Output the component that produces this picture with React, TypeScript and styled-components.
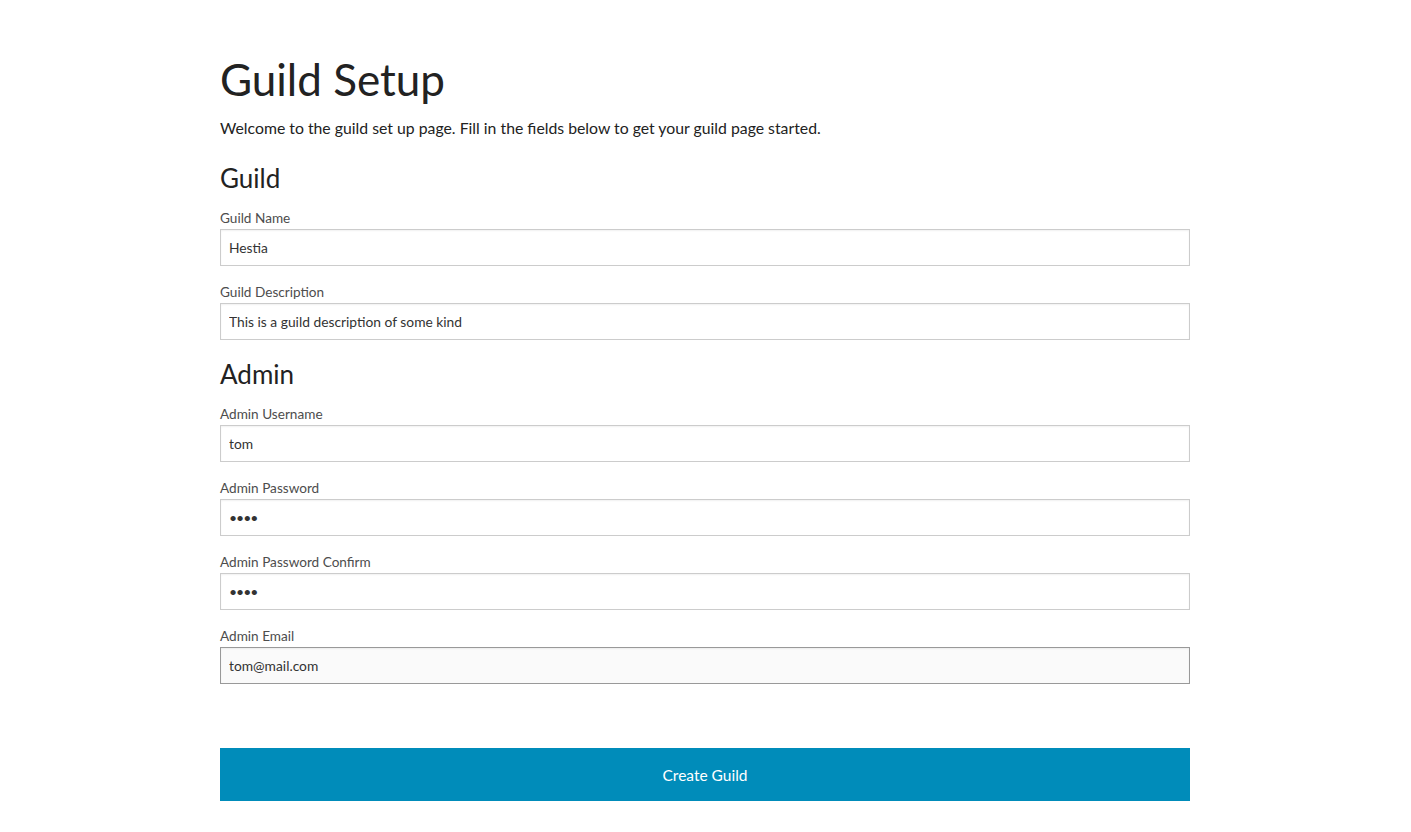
import React from "react";
import styled, { createGlobalStyle } from "styled-components";

const Global = createGlobalStyle`
  html, body { margin: 0; padding: 0; background: #fff; }
  body { font-family: Lato, "Open Sans", sans-serif; color: #222; }
  * { box-sizing: border-box; }
`;

const Page = styled.main`
  padding: 52px 221px 31px 220px;
`;

const Title = styled.h1`
  margin: 0;
  font-size: 44px;
  font-weight: 400;
  line-height: 54px;
  color: #222;
`;

const Intro = styled.p`
  margin: 10px 0 0;
  font-size: 15.8px;
  line-height: 24px;
  color: #222;
`;

const SectionTitle = styled.h2<{ $top: number }>`
  margin: ${(p) => p.$top}px 0 12px;
  font-size: 26px;
  font-weight: 400;
  line-height: 36px;
  color: #222;
`;

const Field = styled.div`
  display: flex;
  flex-direction: column;
  margin-bottom: 16px;
`;

const Label = styled.label`
  font-size: 13.6px;
  line-height: 21px;
  color: #4d4d4d;
`;

const Input = styled.input<{ $active?: boolean }>`
  width: 100%;
  height: 37px;
  padding: 0 8px;
  font-family: Lato, "Open Sans", sans-serif;
  font-size: 13.8px;
  color: #333;
  background: ${(p) => (p.$active ? "#fafafa" : "#fff")};
  border: 1px solid ${(p) => (p.$active ? "#999" : "#ccc")};
  box-shadow: inset 0 1px 2px rgba(0, 0, 0, 0.06);
  border-radius: 0;
  outline: none;
  &[type="password"] {
    font-size: 14px;
    letter-spacing: -1px;
  }
`;

const Submit = styled.button`
  display: block;
  width: 100%;
  height: 53px;
  margin-top: 64px;
  border: none;
  background: #008cba;
  color: #fff;
  font-family: Lato, "Open Sans", sans-serif;
  font-size: 15.5px;
  cursor: pointer;
`;

type F = { label: string; value: string; type?: string; active?: boolean };

const guild: F[] = [
  { label: "Guild Name", value: "Hestia" },
  { label: "Guild Description", value: "This is a guild description of some kind" },
];

const admin: F[] = [
  { label: "Admin Username", value: "tom" },
  { label: "Admin Password", value: "abcd", type: "password" },
  { label: "Admin Password Confirm", value: "abcd", type: "password" },
  { label: "Admin Email", value: "tom@mail.com", active: true },
];

function Fields({ items }: { items: F[] }) {
  return (
    <>
      {items.map((f) => (
        <Field key={f.label}>
          <Label>{f.label}</Label>
          <Input type={f.type ?? "text"} defaultValue={f.value} $active={f.active} />
        </Field>
      ))}
    </>
  );
}

export default function App() {
  return (
    <>
      <Global />
      <Page>
        <Title>Guild Setup</Title>
        <Intro>Welcome to the guild set up page. Fill in the fields below to get your guild page started.</Intro>
        <SectionTitle $top={20}>Guild</SectionTitle>
        <Fields items={guild} />
        <SectionTitle $top={2}>Admin</SectionTitle>
        <Fields items={admin} />
        <Submit type="button">Create Guild</Submit>
      </Page>
    </>
  );
}
